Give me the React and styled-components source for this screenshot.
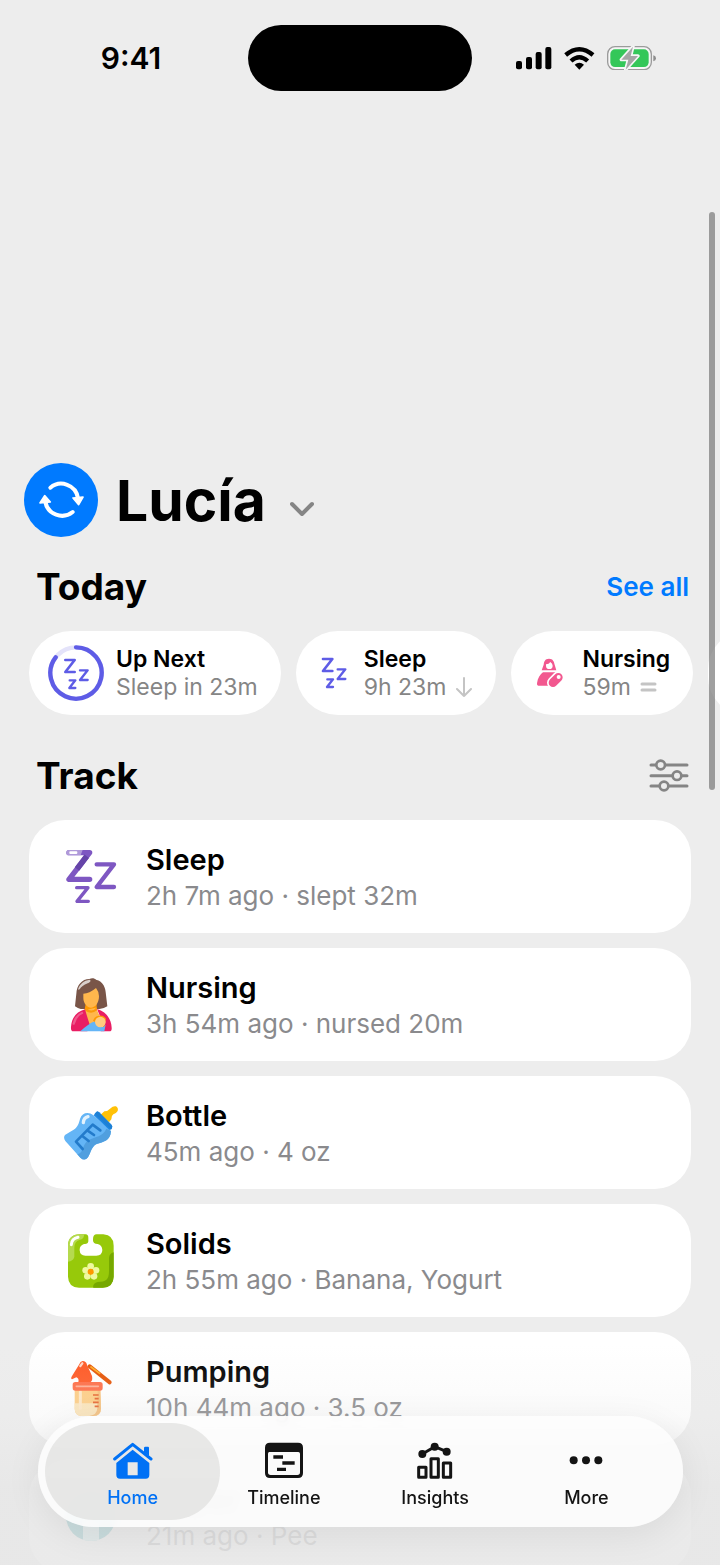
import React from "react";
import styled, { createGlobalStyle } from "styled-components";

const Global = createGlobalStyle`
  *, *::before, *::after { box-sizing: border-box; }
  body {
    margin: 0;
    background: #ededed;
    color: #000;
    font-family: Inter, "Liberation Sans", sans-serif;
  }
  button { font: inherit; color: inherit; background: none; border: 0; padding: 0; cursor: pointer; }
  h1, h2, h3, p, ul { margin: 0; padding: 0; }
  ul { list-style: none; }
  svg { display: block; flex: none; }
`;

const Shell = styled.div`
  position: relative;
  display: flex;
  flex-direction: column;
  height: 100vh;
  overflow: hidden;
`;

const StatusBar = styled.header`
  display: grid;
  grid-template-columns: 1fr 224px 1fr;
  align-items: center;
  justify-items: center;
  flex: none;
  height: 116px;
`;

const Clock = styled.time`
  padding-left: 14px;
  font-size: 30px;
  line-height: 36px;
  font-weight: 600;
`;

const Island = styled.div`
  width: 100%;
  height: 66px;
  border-radius: 33px;
  background: #000;
`;

const StatusIcons = styled.div`
  display: flex;
  align-items: center;
  gap: 12px;
  padding-right: 20px;
`;

const Scroller = styled.main`
  flex: 1;
  min-height: 0;
  padding: 347px 0 0;
  overflow-y: auto;
  scrollbar-width: none;
`;

const ProfileButton = styled.button`
  display: flex;
  align-items: center;
  margin-left: 24px;
`;

const Avatar = styled.span`
  display: grid;
  place-items: center;
  width: 74px;
  height: 74px;
  border-radius: 50%;
  background: #007aff;
`;

const Name = styled.h1`
  margin: 0 24px 0 18px;
  padding-top: 2px;
  font-size: 57px;
  line-height: 72px;
  font-weight: 700;
`;

const SectionHead = styled.div`
  display: flex;
  align-items: center;
  justify-content: space-between;
  height: 48px;
  margin-top: ${(p) => p.$space}px;
  padding: 0 31px 0 36px;
`;

const SectionTitle = styled.h2`
  font-size: 37px;
  line-height: 48px;
  font-weight: 700;
`;

const SeeAll = styled.a`
  color: #007aff;
  font-size: 26px;
  line-height: 36px;
  font-weight: 600;
  text-decoration: none;
`;

const PillRow = styled.ul`
  display: flex;
  gap: 15px;
  margin-top: 20px;
  padding-left: 29px;
  overflow: hidden;
`;

const Pill = styled.li`
  display: flex;
  align-items: center;
  flex: none;
  gap: ${(p) => (p.$ring ? 12 : 15)}px;
  height: 84px;
  padding: 0 23px 0 ${(p) => (p.$ring ? 19 : 25)}px;
  border-radius: 42px;
  background: #fff;
`;

const PillTitle = styled.h3`
  font-size: 23px;
  line-height: 28px;
  font-weight: 600;
`;

const PillValue = styled.p`
  display: flex;
  align-items: center;
  gap: 9px;
  color: #858585;
  font-size: 23px;
  line-height: 28px;
`;

const CardList = styled.ul`
  display: grid;
  gap: 15px;
  margin-top: 20px;
  padding: 0 29px;
`;

const Card = styled.li`
  display: flex;
  align-items: center;
  gap: 27px;
  height: 113px;
  padding: 0 34px;
  border-radius: 36px;
  background: #fff;
`;

const CardText = styled.div`
  padding-top: 2px;
`;

const CardTitle = styled.h3`
  font-size: 29px;
  line-height: 36px;
  font-weight: 600;
`;

const CardDetail = styled.p`
  color: #8a8a8d;
  font-size: 26px;
  line-height: 36px;
`;

const ScrollThumb = styled.div`
  position: absolute;
  top: 212px;
  right: 5px;
  width: 6px;
  height: 578px;
  border-radius: 3px;
  background: rgba(120, 120, 120, 0.7);
`;

const BottomFade = styled.div`
  position: absolute;
  inset: auto 0 0;
  height: 220px;
  pointer-events: none;
  background: linear-gradient(
    rgba(232, 232, 232, 0),
    rgba(232, 232, 232, 0.2) 32%,
    rgba(231, 231, 231, 0.87) 65%,
    rgba(231, 231, 231, 0.87)
  );
`;

const TabBar = styled.nav`
  position: absolute;
  inset: auto 37px 38px 38px;
  display: flex;
  height: 111px;
  padding: 7px 9px 7px 7px;
  border-radius: 56px;
  background: rgba(253, 253, 253, 0.88);
  backdrop-filter: blur(5px);
  box-shadow: 0 8px 36px rgba(0, 0, 0, 0.07);
`;

const Tab = styled.button`
  display: flex;
  flex: 1;
  flex-direction: column;
  align-items: center;
  gap: 6px;
  padding-top: 18px;
  border-radius: 49px;
  color: ${(p) => (p.$active ? "#0071f5" : "#141414")};
  background: ${(p) => (p.$active ? "rgba(218, 218, 217, 0.6)" : "transparent")};
  & + & { margin-left: -24px; }
`;

const TabLabel = styled.span`
  font-size: 18px;
  line-height: 22px;
  font-weight: 500;
`;

/* ---------- status icons ---------- */

const Signal = () => (
  <svg width="36" height="24" viewBox="108 78 108 72" aria-hidden="true">
    <rect x="108" y="123" width="18" height="25" rx="6" />
    <rect x="138" y="111" width="18" height="37" rx="6" />
    <rect x="167" y="96" width="18" height="52" rx="6" />
    <rect x="196" y="81" width="18" height="67" rx="6" />
  </svg>
);

const Wifi = () => (
  <svg width="31" height="24" viewBox="252 78 93 72" aria-hidden="true">
    <g fill="none" stroke="#000" strokeWidth="13">
      <path d="M257 105Q298 70 339 105" />
      <path d="M273 123Q298 100 323 123" />
    </g>
    <path d="M298 149L284 134Q298 122 312 134Z" />
  </svg>
);

const Battery = () => (
  <svg width="50" height="24" viewBox="383 78 150 72" aria-hidden="true">
    <rect x="385" y="80" width="131" height="69" rx="22" fill="#f6f6f6" stroke="#9b9b9b" strokeWidth="4" />
    <path d="M522 106Q530 108 530 115T522 124Z" fill="#8d8d8d" />
    <rect x="393" y="88" width="115" height="53" rx="14" fill="#34c759" />
    <path d="M461 80L426 119H447L439 149L476 108H454Z" fill="#a5a5a5" stroke="#f6f6f6" strokeWidth="10" strokeLinejoin="round" paintOrder="stroke" />
  </svg>
);

/* ---------- header icons ---------- */

const Sync = () => (
  <svg width="46" height="46" viewBox="84 79 138 138" aria-hidden="true">
    <g fill="none" stroke="#fff" strokeWidth="12" strokeLinecap="round">
      <path d="M121 111A51 51 0 0 1 204 142" />
      <path d="M188 184A51 51 0 0 1 106 154" />
    </g>
    <g fill="#fff" stroke="#fff" strokeWidth="5" strokeLinejoin="round">
      <path d="M189 142L219 139L206 162Z" />
      <path d="M90 157L104 135L121 154Z" />
    </g>
  </svg>
);

const Chevron = () => (
  <svg width="24" height="16" viewBox="0 0 24 16" aria-hidden="true">
    <path d="M2 3L12 13L22 3" fill="none" stroke="#858585" strokeWidth="4" strokeLinecap="round" strokeLinejoin="round" />
  </svg>
);

const ChevronSlot = styled.span`
  padding-top: 18px;
`;

const FilterButton = styled.button`
  display: block;
`;

const Sliders = () => (
  <svg width="40" height="34" viewBox="897 596 120 102" aria-hidden="true">
    <g stroke="#858585" strokeWidth="9" strokeLinecap="round">
      <path d="M903 614H1011M903 646H1011M903 677H1011" />
      <g fill="#ededed" strokeWidth="8">
        <circle cx="932" cy="614" r="13" />
        <circle cx="981" cy="646" r="13" />
        <circle cx="942" cy="677" r="13" />
      </g>
    </g>
  </svg>
);

/* ---------- pill icons ---------- */

const SmallZs = () => (
  <g fill="none" stroke="#5e5ce6" strokeWidth="7" strokeLinecap="round" strokeLinejoin="round">
    <path d="M136 120H164L136 156H164" strokeWidth="8" />
    <path d="M180 151H203L180 180H203" />
    <path d="M149 181H166L148 204H166" />
  </g>
);

const RingZs = () => (
  <svg width="56" height="56" viewBox="84 75 168 168" aria-hidden="true">
    <circle cx="168" cy="159" r="77" fill="none" stroke="#e4e3fa" strokeWidth="13" />
    <path d="M168 82A77 77 0 1 1 107 112" fill="none" stroke="#5e5ce6" strokeWidth="13" strokeLinecap="round" />
    <SmallZs />
  </svg>
);

const PlainZs = () => (
  <svg width="28" height="32" viewBox="130 114 84 96" aria-hidden="true">
    <SmallZs />
  </svg>
);

const MotherGlyph = () => (
  <svg width="31" height="32" viewBox="561 292 93 96" aria-hidden="true">
    <path fill="#f2588f" d="M600 297C588 297 585 306 584 315L578 332H622L617 315C615 306 612 297 600 297Z" />
    <path fill="#fff" d="M591 314Q600 314 604 307Q611 312 611 318A10 10 0 0 1 591 318Z" />
    <path fill="#f2588f" d="M582 338H619V378H568Q563 378 564 371C566 355 574 344 582 338Z" />
    <path d="M612 369L628 353" stroke="#fff" strokeWidth="36" strokeLinecap="round" />
    <path d="M612 369L628 353" stroke="#f2588f" strokeWidth="26" strokeLinecap="round" />
    <circle cx="629" cy="352" r="6" fill="#fff" />
  </svg>
);

const DownArrow = () => (
  <svg width="18" height="20" viewBox="0 0 18 20" fill="none" stroke="#c4c4c4" strokeWidth="2" strokeLinecap="round" strokeLinejoin="round" aria-label="less than usual">
    <path d="M9 1V19M2 12L9 19L16 12" />
  </svg>
);

const EqualMark = () => (
  <svg width="17" height="20" viewBox="0 0 17 20" stroke="#c4c4c4" strokeWidth="3" strokeLinecap="round" aria-label="same as usual">
    <path d="M2 7H15M2 13H15" />
  </svg>
);

/* ---------- card icons ---------- */

const SleepIcon = () => (
  <svg width="56" height="56" viewBox="69 57 168 168" aria-hidden="true">
    <g fill="none" stroke="#7e57c2" strokeLinecap="round" strokeLinejoin="round">
      <path d="M87 68H149L87 148H149" strokeWidth="16" />
      <path d="M111 117L140 79" stroke="#6544a8" strokeWidth="17" strokeLinecap="butt" />
      <path d="M170 103H222L170 171H222" strokeWidth="13" />
      <path d="M110 173H144L111 214H145" strokeWidth="10" />
    </g>
    <path d="M87 60H128L122 76H87A8 8 0 0 1 87 60Z" fill="#b09ad9" />
    <rect x="88" y="64" width="24" height="8" rx="3" fill="#fff" />
  </svg>
);

const NursingIcon = () => (
  <svg width="56" height="56" viewBox="69 440 168 168" aria-hidden="true">
    <path d="M148 446C155 442 164 443 168 448C190 453 197 472 198 494L202 528Q188 537 176 536H122Q114 535 105 528L109 490C110 465 126 446 148 446Z" fill="#795548" />
    <path d="M114 478C118 462 132 450 149 448C155 451 150 456 143 459C131 463 123 470 119 477Z" fill="#d9cfcb" />
    <path d="M137 520H170V540L178 560L150 600L132 548Z" fill="#ff9800" />
    <path d="M132 540L168 532L182 565L150 598Z" fill="#ffb74d" />
    <path d="M130 490Q148 490 168 473Q177 484 177 498C177 520 164 532 153 532S130 519 130 503Z" fill="#ffb74d" />
    <path d="M136 530Q154 551 171 530V540Q154 554 136 541Z" fill="#f99a0b" />
    <path d="M135 537C142 560 146 575 152 590L142 603H100Q92 603 93 590C95 560 110 545 135 537Z" fill="#e91e63" />
    <path d="M171 536C200 544 214 568 215 592Q216 603 208 603H182L196 575L181 560Z" fill="#e91e63" />
    <path d="M101 580Q107 556 126 548" fill="none" stroke="#ee5a8d" strokeWidth="7" strokeLinecap="round" />
    <path d="M121 603C136 589 150 578 165 573C174 592 186 594 197 583L193 603Z" fill="#64b5f6" />
    <path d="M159 571A22 22 0 0 1 198 565L192 590Z" fill="#ff9800" />
    <circle cx="181" cy="575" r="16" fill="#ffcc80" />
  </svg>
);

const BottleIcon = () => (
  <svg width="56" height="56" viewBox="69 73 168 168" aria-hidden="true">
    <path d="M181 103L193 92Q204 92 212 83Q219 75 228 77Q236 82 233 91Q229 98 220 101Q213 106 214 116L207 125Z" fill="#ffc107" />
    <path d="M160 104C145 92 126 96 120 115C116 129 114 139 101 147Q87 155 75 163Q69 170 76 181L121 231Q134 243 144 230C154 213 154 198 170 190C190 183 211 182 213 151Z" fill="#64b5f6" />
    <path d="M213 151C211 182 190 183 170 190C154 198 154 213 144 230Q134 243 121 231L112 221C132 218 126 190 146 178C166 167 188 169 199 144Z" fill="#509fdf" />
    <path d="M161 104L169 93Q174 91 178 95L215 132Q219 137 215 145L208 148Z" fill="#1e88e5" />
    <path d="M164 99L173 92L217 137L213 147Z" fill="#1e80d4" />
    <path d="M108 183L158 132L181 149M142 149L162 163M126 165L146 181M108 183L128 205" fill="none" stroke="#237bcb" strokeWidth="8" strokeLinecap="round" strokeLinejoin="round" />
    <path d="M130 126Q131 111 144 108" fill="none" stroke="#e3f2fd" strokeWidth="10" strokeLinecap="round" />
  </svg>
);

const BibIcon = () => (
  <svg width="56" height="56" viewBox="69 456 168 168" aria-hidden="true">
    <path d="M119 460H137Q145 461 145 470V481Q144 489 135 489H132Q118 494 119 508Q120 524 136 524H169Q187 524 187 507Q186 492 173 489Q158 489 159 475Q159 460 170 460H190Q221 462 221 494V587Q220 619 188 620H117Q85 619 84 587V493Q85 461 119 460Z" fill="#97c90a" />
    <path d="M221 514V587Q220 619 188 620H160Q157 607 173 603C198 603 207 596 207 571V531Q208 517 221 514Z" fill="#76a800" />
    <path d="M84 542V493Q85 461 119 460H132Q134 474 118 477Q103 482 103 500V528Q99 541 84 542Z" fill="#b5da4e" />
    <path d="M94 491Q95 473 114 469" fill="none" stroke="#fff" strokeWidth="9" strokeLinecap="round" />
    <g fill="#eff9a0">
      <circle cx="152" cy="556" r="10" />
      <circle cx="137" cy="568" r="10" />
      <circle cx="168" cy="568" r="10" />
      <circle cx="142" cy="586" r="10" />
      <circle cx="162" cy="586" r="10" />
    </g>
    <circle cx="152" cy="572" r="9" fill="#ff9800" />
  </svg>
);

const PumpIcon = () => (
  <svg width="56" height="56" viewBox="129 90 168 168" aria-hidden="true">
    <path d="M164 176H241L243 233Q242 254 221 255H185Q165 254 164 233Z" fill="#ffcc80" />
    <path d="M164 217H242V233Q242 254 221 255H185Q165 254 164 233Z" fill="#fde5b8" />
    <path d="M233 178H241L243 233Q242 254 221 255H208Q231 252 232 232Z" fill="#f6bd76" />
    <path d="M181 182V232" stroke="#ffe7c5" strokeWidth="9" strokeLinecap="round" />
    <path d="M219 192H236M224 203H236M219 214H236M224 226H236" stroke="#e65d24" strokeWidth="5" />
    <path d="M188 90Q198 90 201 101L216 135Q219 149 211 154H175Q178 142 169 139L156 145Q151 143 156 135L177 101Q181 91 188 90Z" fill="#ff5722" />
    <path d="M181 105L187 97" stroke="#ffd4c3" strokeWidth="7" strokeLinecap="round" />
    <rect x="158" y="153" width="90" height="26" rx="8" fill="#ff6a42" />
    <path d="M169 166H235" stroke="#ffad91" strokeWidth="5" strokeLinecap="round" />
    <path d="M209 106L269 154" stroke="#e65100" strokeWidth="12" strokeLinecap="round" />
    <path d="M213 108L239 127" stroke="#ffab22" strokeWidth="5" strokeLinecap="round" />
  </svg>
);

const DiaperIcon = () => (
  <svg width="56" height="56" viewBox="0 0 56 56" aria-hidden="true">
    <circle cx="28" cy="27" r="25" fill="#008f99" />
    <path d="M3 24Q4 8 20 6H46Q53 14 53 24L50 31Q28 22 6 31Z" fill="#00e0ee" />
    <path d="M20 30H36V51Q28 53 20 51Z" fill="#b7eff0" />
  </svg>
);

/* ---------- tab icons ---------- */

const HomeIcon = () => (
  <svg width="40" height="40" viewBox="281 330 120 120" fill="currentColor" aria-hidden="true">
    <path d="M374 350Q374 347 378 347H386Q389 347 389 350V375L374 363Z" />
    <path d="M286 384L340 340L395 384" fill="none" stroke="currentColor" strokeWidth="9" strokeLinecap="round" strokeLinejoin="round" />
    <path fillRule="evenodd" d="M340 356L390 396V432Q390 443 379 443H302Q291 443 291 432V396ZM325 394V433H355V394Z" />
  </svg>
);

const TimelineIcon = () => (
  <svg width="40" height="40" viewBox="735 330 120 120" aria-hidden="true">
    <path fill="currentColor" fillRule="evenodd" d="M753 335H837Q852 335 852 350V426Q852 441 837 441H753Q738 441 738 426V350Q738 335 753 335ZM751 363Q747 363 747 368V424Q747 432 755 432H835Q843 432 843 424V368Q843 363 838 363Z" />
    <path d="M763 378H792M790 396H827M774 415H801" stroke="currentColor" strokeWidth="10" />
  </svg>
);

const InsightsIcon = () => (
  <svg width="40" height="40" viewBox="171 330 120 120" aria-hidden="true">
    <g fill="none" stroke="currentColor" strokeWidth="9" strokeLinejoin="round">
      <path d="M182 409H204V439H182ZM219 383H241V439H219ZM256 396H278V439H256Z" />
      <path d="M193 369L230 347L266 362" />
    </g>
    <g fill="currentColor">
      <circle cx="193" cy="369" r="12" />
      <circle cx="230" cy="347" r="12" />
      <circle cx="266" cy="362" r="12" />
    </g>
  </svg>
);

const MoreIcon = () => (
  <svg width="40" height="40" viewBox="625 330 120 120" fill="currentColor" aria-hidden="true">
    <circle cx="648" cy="388" r="12" />
    <circle cx="685" cy="388" r="12" />
    <circle cx="722" cy="388" r="12" />
  </svg>
);

const pills = [
  { title: "Up Next", value: "Sleep in 23m", Icon: RingZs, ring: true },
  { title: "Sleep", value: "9h 23m", Icon: PlainZs, Trend: DownArrow },
  { title: "Nursing", value: "59m", Icon: MotherGlyph, Trend: EqualMark },
];

const cards = [
  { title: "Sleep", detail: "2h 7m ago · slept 32m", Icon: SleepIcon },
  { title: "Nursing", detail: "3h 54m ago · nursed 20m", Icon: NursingIcon },
  { title: "Bottle", detail: "45m ago · 4 oz", Icon: BottleIcon },
  { title: "Solids", detail: "2h 55m ago · Banana, Yogurt", Icon: BibIcon },
  { title: "Pumping", detail: "10h 44m ago · 3.5 oz", Icon: PumpIcon },
  { title: "Diaper", detail: "21m ago · Pee", Icon: DiaperIcon },
];

const tabs = [
  { label: "Home", Icon: HomeIcon, active: true },
  { label: "Timeline", Icon: TimelineIcon },
  { label: "Insights", Icon: InsightsIcon },
  { label: "More", Icon: MoreIcon },
];

export default function App() {
  return (
    <Shell>
      <Global />
      <StatusBar>
        <Clock>9:41</Clock>
        <Island />
        <StatusIcons>
          <Signal />
          <Wifi />
          <Battery />
        </StatusIcons>
      </StatusBar>
      <Scroller>
        <ProfileButton>
          <Avatar><Sync /></Avatar>
          <Name>Lucía</Name>
          <ChevronSlot><Chevron /></ChevronSlot>
        </ProfileButton>
        <SectionHead $space={26}>
          <SectionTitle>Today</SectionTitle>
          <SeeAll href="#today">See all</SeeAll>
        </SectionHead>
        <PillRow>
          {pills.map(({ title, value, Icon, Trend, ring }) => (
            <Pill key={title} $ring={ring}>
              <Icon />
              <div>
                <PillTitle>{title}</PillTitle>
                <PillValue>{value}{Trend && <Trend />}</PillValue>
              </div>
            </Pill>
          ))}
          <Pill aria-hidden="true"><PlainZs /></Pill>
        </PillRow>
        <SectionHead $space={37}>
          <SectionTitle>Track</SectionTitle>
          <FilterButton aria-label="Customize trackers"><Sliders /></FilterButton>
        </SectionHead>
        <CardList>
          {cards.map(({ title, detail, Icon }) => (
            <Card key={title}>
              <Icon />
              <CardText>
                <CardTitle>{title}</CardTitle>
                <CardDetail>{detail}</CardDetail>
              </CardText>
            </Card>
          ))}
        </CardList>
      </Scroller>
      <ScrollThumb />
      <BottomFade />
      <TabBar>
        {tabs.map(({ label, Icon, active }) => (
          <Tab key={label} $active={active} aria-current={active ? "page" : undefined}>
            <Icon />
            <TabLabel>{label}</TabLabel>
          </Tab>
        ))}
      </TabBar>
    </Shell>
  );
}
